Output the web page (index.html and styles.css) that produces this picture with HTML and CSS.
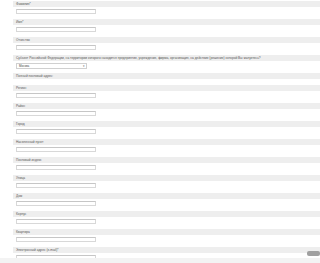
FILE: index.html
```html
<!DOCTYPE html>
<html lang="ru">
<head>
<meta charset="utf-8">
<link rel="stylesheet" href="styles.css">
</head>
<body>
<form class="form">
  <div class="field"><div class="label">Фамилия*</div><div class="ctrl"><input class="inp" type="text"></div></div>
  <div class="field"><div class="label">Имя*</div><div class="ctrl"><input class="inp" type="text"></div></div>
  <div class="field"><div class="label">Отчество</div><div class="ctrl"><input class="inp" type="text"></div></div>
  <div class="field"><div class="label">Субъект Российской Федерации, на территории которого находится предприятие, учреждение, фирма, организация, на действие (решение) которой Вы жалуетесь?</div><div class="ctrl"><div class="sel"><span>Москва</span><span class="arr">▾</span></div></div></div>
  <div class="field head"><div class="label">Полный почтовый адрес:</div></div>
  <div class="field"><div class="label">Регион</div><div class="ctrl"><input class="inp" type="text"></div></div>
  <div class="field"><div class="label">Район</div><div class="ctrl"><input class="inp" type="text"></div></div>
  <div class="field"><div class="label">Город</div><div class="ctrl"><input class="inp" type="text"></div></div>
  <div class="field"><div class="label">Населенный пункт</div><div class="ctrl"><input class="inp" type="text"></div></div>
  <div class="field"><div class="label">Почтовый индекс</div><div class="ctrl"><input class="inp" type="text"></div></div>
  <div class="field"><div class="label">Улица</div><div class="ctrl"><input class="inp" type="text"></div></div>
  <div class="field"><div class="label">Дом</div><div class="ctrl"><input class="inp" type="text"></div></div>
  <div class="field"><div class="label">Корпус</div><div class="ctrl"><input class="inp" type="text"></div></div>
  <div class="field"><div class="label">Квартира</div><div class="ctrl"><input class="inp" type="text"></div></div>
  <div class="field"><div class="label">Электронный адрес (e-mail)*</div><div class="ctrl"><input class="inp" type="text"></div></div>
</form>
<div class="scroll"><span class="thumb"></span></div>
</body>
</html>
```
FILE: styles.css
```css
html, body {
  margin: 0;
  padding: 0;
  background: #ffffff;
  height: 263px;
  overflow: hidden;
}
body {
  font-family: "Liberation Sans", Arial, sans-serif;
  position: relative;
}
.form {
  padding: 1px 0 0 13px;
  display: flex;
  flex-direction: column;
}
.field {
  display: flex;
  flex-direction: column;
}
.label {
  height: 6px;
  background: #eeeeee;
  color: #555;
  font-size: 3.2px;
  line-height: 6px;
  padding-left: 3px;
  white-space: nowrap;
  overflow: hidden;
}
.ctrl {
  height: 12px;
  padding: 2px 0 0 3px;
  box-sizing: border-box;
}
.head {
  height: 12px;
}
.inp {
  display: block;
  box-sizing: border-box;
  width: 80px;
  height: 5px;
  margin: 0;
  padding: 0;
  border: 1px solid #d8d8d8;
  border-top-color: #c6c6c6;
  background: #fff;
}
.sel {
  box-sizing: border-box;
  width: 71px;
  height: 6px;
  border: 1px solid #d0d0d0;
  font-size: 3px;
  line-height: 4px;
  color: #444;
  padding-left: 2px;
  display: flex;
  justify-content: space-between;
}
.arr {
  padding-right: 1px;
  color: #666;
}
.scroll {
  position: absolute;
  left: 0;
  right: 0;
  bottom: 0;
  height: 5px;
  background: #f3f3f3;
}
.thumb {
  position: absolute;
  right: 0;
  top: -7px;
  width: 13px;
  height: 5px;
  border-radius: 2px;
  background: #a0a0a0;
}
```
